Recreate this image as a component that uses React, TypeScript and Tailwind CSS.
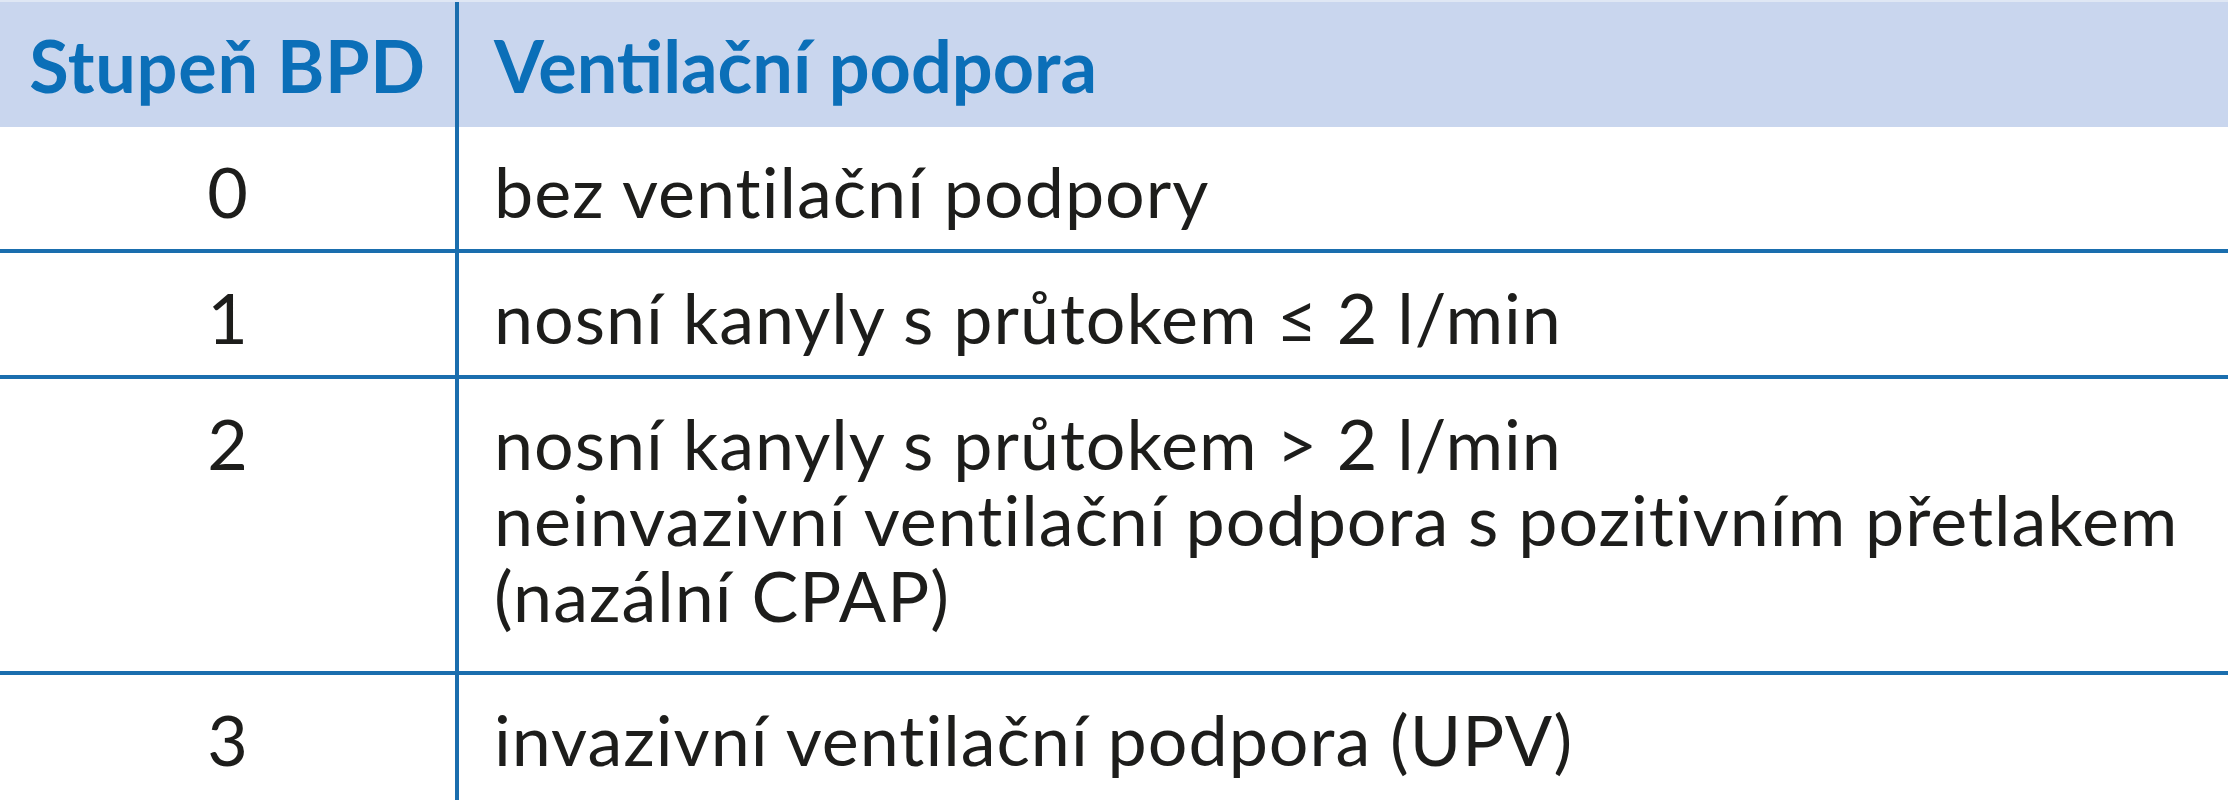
const rows: { n: string; lines: string[]; h: string }[] = [
  { n: "0", lines: ["bez ventilační podpory"], h: "h-[126px]" },
  { n: "1", lines: ["nosní kanyly s průtokem ≤ 2 l/min"], h: "h-[126px]" },
  {
    n: "2",
    lines: [
      "nosní kanyly s průtokem > 2 l/min",
      "neinvazivní ventilační podpora s pozitivním přetlakem",
      "(nazální CPAP)",
    ],
    h: "h-[296px]",
  },
  { n: "3", lines: ["invazivní ventilační podpora (UPV)"], h: "h-[200px]" },
];

export default function App() {
  return (
    <div className="w-[2228px] h-[800px] overflow-hidden bg-white font-['Lato',sans-serif] border-t-2 border-[#dfe7f4]">
      <div className="flex h-[125px] bg-[#c9d6ee]">
        <div className="w-[459px] shrink-0 border-r-4 border-[#1a6eae] flex items-center justify-center text-[72px] font-bold text-[#0b6fb8] leading-none tracking-[0.01em]">
          Stupeň BPD
        </div>
        <div className="flex-1 flex items-center pl-[35px] text-[72px] font-bold text-[#0b6fb8] leading-none">
          Ventilační podpora
        </div>
      </div>
      {rows.map((r, i) => (
        <div
          key={r.n}
          className={`flex ${r.h} ${i < rows.length - 1 ? "border-b-4 border-[#1a6eae]" : ""}`}
        >
          <div className="w-[459px] shrink-0 border-r-4 border-[#1a6eae] pt-[26px] text-center text-[70px] leading-[76px] text-[#1d1d1b]">
            {r.n}
          </div>
          <div className="flex-1 pl-[35px] pt-[26px] text-[70px] leading-[76px] text-[#1d1d1b] tracking-[0.014em]">
            {r.lines.map((l) => (
              <div key={l}>{l}</div>
            ))}
          </div>
        </div>
      ))}
    </div>
  );
}
